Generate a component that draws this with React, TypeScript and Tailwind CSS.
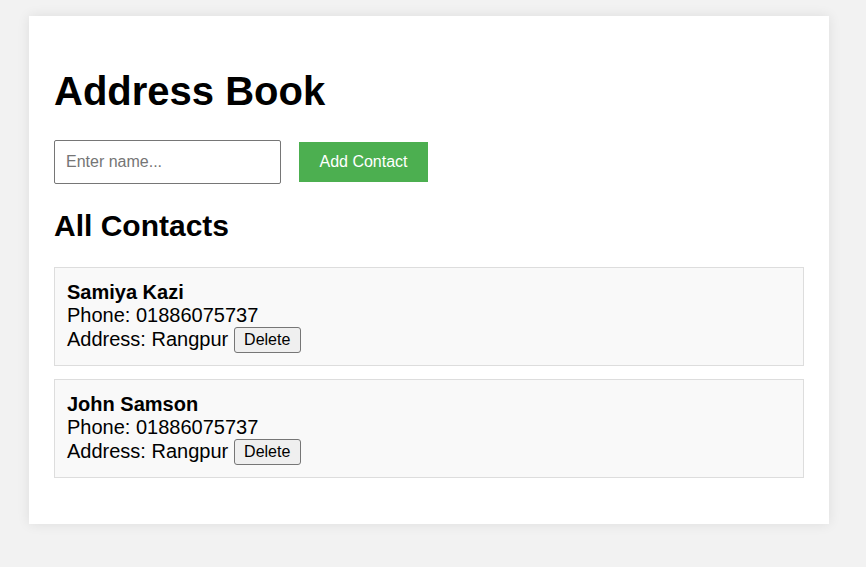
import React, { useState } from 'react';

type Contact = {
  id: number;
  name: string;
  phone: string;
  address: string;
};

const initialContacts: Contact[] = [
  { id: 1, name: 'Samiya Kazi', phone: '01886075737', address: 'Rangpur' },
  { id: 2, name: 'John Samson', phone: '01886075737', address: 'Rangpur' },
];

export default function App() {
  const [contacts, setContacts] = useState<Contact[]>(initialContacts);
  const [name, setName] = useState('');

  const handleAdd = () => {
    if (!name.trim()) return;
    setContacts([
      ...contacts,
      { id: Date.now(), name: name.trim(), phone: '01886075737', address: 'Rangpur' },
    ]);
    setName('');
  };

  const handleDelete = (id: number) => {
    setContacts(contacts.filter((c) => c.id !== id));
  };

  return (
    <div className="min-h-[567px] bg-[#f2f2f2] pt-[16px] pl-[29px] pb-[40px] font-['Liberation_Sans',Arial,sans-serif] text-black">
      <div className="w-[800px] bg-white px-[25px] pt-[25px] pb-[46px] shadow-[0_0_12px_rgba(0,0,0,0.09)]">
        <h1 className="my-[26.5px] text-[40px] font-bold leading-[46px]">Address Book</h1>

        {/* Add form */}
        <div className="flex items-center gap-[18px]">
          <input
            type="text"
            value={name}
            onChange={(e) => setName(e.target.value)}
            placeholder="Enter name..."
            className="h-[44px] w-[227px] rounded-[2px] border border-[#767676] bg-white px-[11px] text-[16px] outline-none placeholder:text-[#757575]"
          />
          <button
            type="button"
            onClick={handleAdd}
            className="h-[40px] w-[129px] bg-[#4caf50] text-[16px] text-white"
          >
            Add Contact
          </button>
        </div>

        <h2 className="mt-[25px] mb-[24px] text-[30px] font-bold leading-[34px]">All Contacts</h2>

        {/* Contact list */}
        <div className="flex flex-col gap-[13px]">
          {contacts.map((c) => (
            <div
              key={c.id}
              className="border border-[#dddddd] bg-[#f9f9f9] px-[12px] py-[12.5px] text-[20px] leading-[23px]"
            >
              <div className="font-bold">{c.name}</div>
              <div>Phone: {c.phone}</div>
              <div className="flex h-[26px] items-center">
                <span>Address: {c.address}</span>
                <button
                  type="button"
                  onClick={() => handleDelete(c.id)}
                  className="ml-[5.5px] h-[26px] w-[67px] rounded-[3px] border border-[#767676] bg-[#efefef] text-[16px] leading-[18px] text-black"
                >
                  Delete
                </button>
              </div>
            </div>
          ))}
        </div>
      </div>
    </div>
  );
}
